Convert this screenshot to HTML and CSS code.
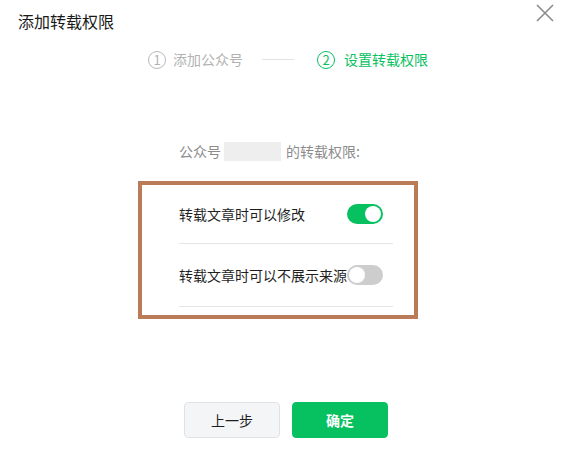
FILE: index.html
```html
<!DOCTYPE html>
<html lang="zh-CN">
<head>
<meta charset="utf-8">
<title>添加转载权限</title>
<link rel="stylesheet" href="styles.css">
</head>
<body>
<div class="dialog">
  <div class="header">
    <div class="title">添加转载权限</div>
    <button class="close" aria-label="关闭">
      <svg width="18" height="18" viewBox="0 0 18 18"><path d="M1 1 L17 17 M17 1 L1 17" stroke="#8a8a8a" stroke-width="1.6" fill="none"/></svg>
    </button>
  </div>
  <div class="steps">
    <div class="step">
      <span class="num">1</span>
      <span class="label">添加公众号</span>
    </div>
    <div class="step-line"></div>
    <div class="step step-active">
      <span class="num">2</span>
      <span class="label">设置转载权限</span>
    </div>
  </div>
  <div class="account-line">
    <span>公众号</span>
    <span class="masked"></span>
    <span>的转载权限:</span>
  </div>
  <div class="perm-box">
    <div class="row row-first">
      <span class="row-label">转载文章时可以修改</span>
      <span class="switch switch-on"><span class="knob"></span></span>
    </div>
    <div class="row">
      <span class="row-label">转载文章时可以不展示来源</span>
      <span class="switch"><span class="knob"></span></span>
    </div>
  </div>
  <div class="actions">
    <button class="btn btn-default">上一步</button>
    <button class="btn btn-primary">确定</button>
  </div>
</div>
</body>
</html>
```

FILE: styles.css
```css
* { box-sizing: border-box; }
html, body {
  margin: 0;
  padding: 0;
  background: #ffffff;
}
body {
  width: 584px;
  height: 450px;
  overflow: hidden;
  font-family: "Noto Sans CJK SC", "Noto Sans", "Liberation Sans", sans-serif;
  font-size: 14px;
  color: #353535;
}
.dialog {
  width: 584px;
  height: 450px;
}
.header {
  display: flex;
  justify-content: space-between;
  align-items: flex-start;
  padding: 4px 30px 0 18px;
}
.title {
  margin-top: 6px;
  font-size: 16px;
  line-height: 22px;
  color: #1a1a1a;
}
.close {
  width: 18px;
  height: 18px;
  padding: 0;
  margin: 0;
  border: 0;
  background: none;
  display: block;
}
.close svg { display: block; }

.steps {
  display: flex;
  align-items: center;
  margin-top: 18px;
  padding-left: 148px;
  height: 19px;
}
.step {
  display: flex;
  align-items: center;
  color: #b2b2b2;
}
.num {
  width: 18px;
  height: 18px;
  border: 1px solid #b8b8b8;
  border-radius: 50%;
  display: flex;
  align-items: center;
  justify-content: center;
  font-size: 13px;
  line-height: 1;
  margin-right: 7px;
}
.label {
  line-height: 19px;
}
.step-line {
  width: 32px;
  height: 1px;
  background: #e2e2e2;
  margin: 0 23px 0 19px;
}
.step-active { color: #07c160; }
.step-active .num {
  border-color: #07c160;
  margin-right: 9px;
}

.account-line {
  display: flex;
  align-items: center;
  margin-top: 73px;
  padding-left: 179px;
  height: 19px;
  color: #8c8c8c;
  line-height: 19px;
}
.masked {
  width: 57px;
  height: 19px;
  background: #eeeeee;
  margin: 0 5px 0 3px;
}

.perm-box {
  width: 280px;
  margin: 20px 0 0 138px;
  border: 4px solid #b97b58;
  padding: 0 21px 8px 37px;
}
.row {
  display: flex;
  align-items: center;
  justify-content: space-between;
  height: 63px;
  padding-right: 10px;
  border-bottom: 1px solid #e5e5e5;
}
.row-first { height: 59px; }
.row-label {
  color: #1f1f1f;
  white-space: nowrap;
  line-height: 20px;
}
.switch {
  flex-shrink: 0;
  position: relative;
  width: 36px;
  height: 20px;
  border-radius: 10px;
  background: #cdcdcd;
}
.switch .knob {
  position: absolute;
  top: 2px;
  left: 2px;
  width: 16px;
  height: 16px;
  border-radius: 50%;
  background: #ffffff;
}
.switch-on { background: #07c160; }
.switch-on .knob {
  left: auto;
  right: 2px;
}

.actions {
  display: flex;
  gap: 12px;
  margin-top: 83px;
  padding-left: 184px;
}
.btn {
  width: 96px;
  height: 36px;
  border-radius: 4px;
  font-family: inherit;
  font-size: 14px;
  padding: 0;
  cursor: pointer;
}
.btn-default {
  background: #f4f5f7;
  border: 1px solid #e0e2e6;
  color: #1f1f1f;
}
.btn-primary {
  background: #07c160;
  border: 1px solid #07c160;
  color: #ffffff;
  font-weight: bold;
}
```
